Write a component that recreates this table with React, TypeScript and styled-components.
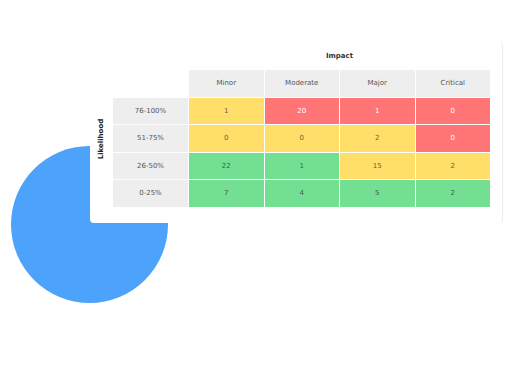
import styled, { createGlobalStyle } from 'styled-components';

type Level = 'low' | 'mid' | 'high';

const columns = ['Minor', 'Moderate', 'Major', 'Critical'];

const rows: { label: string; cells: { value: number; level: Level }[] }[] = [
  {
    label: '76-100%',
    cells: [
      { value: 1, level: 'mid' },
      { value: 20, level: 'high' },
      { value: 1, level: 'high' },
      { value: 0, level: 'high' },
    ],
  },
  {
    label: '51-75%',
    cells: [
      { value: 0, level: 'mid' },
      { value: 0, level: 'mid' },
      { value: 2, level: 'mid' },
      { value: 0, level: 'high' },
    ],
  },
  {
    label: '26-50%',
    cells: [
      { value: 22, level: 'low' },
      { value: 1, level: 'low' },
      { value: 15, level: 'mid' },
      { value: 2, level: 'mid' },
    ],
  },
  {
    label: '0-25%',
    cells: [
      { value: 7, level: 'low' },
      { value: 4, level: 'low' },
      { value: 5, level: 'low' },
      { value: 2, level: 'low' },
    ],
  },
];

const levelBg: Record<Level, string> = {
  low: '#73df93',
  mid: '#ffdf6a',
  high: '#ff7474',
};

const levelFg: Record<Level, string> = {
  low: '#4a5a4e',
  mid: '#6b6240',
  high: '#ffffff',
};

function App() {
  return (
    <>
      <GlobalStyle />
      <Page>
        <Pie />
        <Card>
          <Side>
            <AxisY>Likelihood</AxisY>
          </Side>
          <Main>
            <AxisX>Impact</AxisX>
            <Matrix>
              <Corner />
              {columns.map((c) => (
                <HeadCell key={c}>{c}</HeadCell>
              ))}
              {rows.map((r) => (
                <>
                  <HeadCell key={r.label}>{r.label}</HeadCell>
                  {r.cells.map((cell, i) => (
                    <Cell key={r.label + i} $level={cell.level}>
                      {cell.value}
                    </Cell>
                  ))}
                </>
              ))}
            </Matrix>
          </Main>
        </Card>
      </Page>
    </>
  );
}

export default App;

const GlobalStyle = createGlobalStyle`
  body {
    margin: 0;
    background: #fff;
    font-family: "DejaVu Sans", "Open Sans", sans-serif;
  }
`;

const Page = styled.div`
  position: relative;
  width: 505px;
  height: 370px;
  padding: 42px 0 0 90px;
  box-sizing: border-box;
  overflow: hidden;
`;

const Pie = styled.div`
  position: absolute;
  left: 11px;
  top: 146px;
  width: 157px;
  height: 157px;
  border-radius: 50%;
  background: #4da2fc;
`;

const Card = styled.div`
  position: relative;
  width: 412px;
  height: 181px;
  background: #fff;
  border-radius: 4px;
  box-shadow: 1px 0 1px rgba(0, 0, 0, 0.08);
  display: flex;
  box-sizing: border-box;
`;

const Side = styled.div`
  width: 23px;
  margin-top: 28px;
  height: 137px;
  display: flex;
  align-items: center;
  justify-content: center;
`;

const AxisY = styled.div`
  transform: rotate(-90deg);
  font-size: 7px;
  font-weight: bold;
  color: #222;
  white-space: nowrap;
`;

const Main = styled.div`
  display: flex;
  flex-direction: column;
`;

const AxisX = styled.div`
  height: 28px;
  padding-left: 76px;
  display: flex;
  align-items: center;
  justify-content: center;
  font-size: 7px;
  font-weight: bold;
  color: #333;
`;

const Matrix = styled.div`
  display: grid;
  grid-template-columns: 75px repeat(4, 74.5px);
  grid-template-rows: 26.5px repeat(4, 26.5px);
  gap: 1px;
`;

const Corner = styled.div``;

const HeadCell = styled.div`
  background: #eeeeee;
  color: #555;
  font-size: 7px;
  display: flex;
  align-items: center;
  justify-content: center;
`;

const Cell = styled.div<{ $level: Level }>`
  background: ${(p) => levelBg[p.$level]};
  color: ${(p) => levelFg[p.$level]};
  font-size: 7px;
  display: flex;
  align-items: center;
  justify-content: center;
`;
